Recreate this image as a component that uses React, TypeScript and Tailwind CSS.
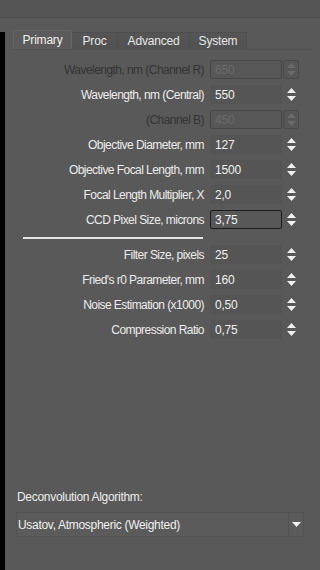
import React from "react";

const font = { fontFamily: '"Liberation Sans", Arial, sans-serif' };

function Spinner({ disabled }: { disabled?: boolean }) {
  const c = disabled ? "#6a6a6a" : "#f2f2f2";
  return (
    <div
      className={
        "w-[16px] h-[19px] flex flex-col items-center justify-center gap-[3px] rounded-[2px] " +
        (disabled ? "border border-[#4a4a4a] bg-[#565656]" : "")
      }
    >
      <svg width="9" height="5" viewBox="0 0 9 5">
        <polygon points="0,5 4.5,0 9,5" fill={c} />
      </svg>
      <svg width="9" height="5" viewBox="0 0 9 5">
        <polygon points="0,0 9,0 4.5,5" fill={c} />
      </svg>
    </div>
  );
}

function Row({
  label,
  value,
  disabled,
  active,
}: {
  label: string;
  value: string;
  disabled?: boolean;
  active?: boolean;
}) {
  return (
    <div className="h-[25px] flex items-center">
      <div
        className={
          "w-[205px] text-right text-[12px] tracking-[-0.55px] pr-[6px] whitespace-nowrap " +
          (disabled ? "text-[#343434]" : "text-[#ececec]")
        }
      >
        {label}
      </div>
      <div
        className={
          "w-[72px] h-[19px] flex items-center pl-[4px] text-[12px] tracking-[-0.2px] rounded-[2px] border " +
          (disabled
            ? "border-[#454545] bg-[#575757] text-[#6b6b6b]"
            : active
            ? "border-[#1c1c1c] bg-[#585858] text-[#f0f0f0]"
            : "border-[#545454] bg-[#555555] text-[#f0f0f0]")
        }
      >
        {value}
      </div>
      <div className="ml-[1px]">
        <Spinner disabled={disabled} />
      </div>
    </div>
  );
}

export default function App() {
  return (
    <div
      className="w-[320px] h-[570px] bg-[#595959] overflow-hidden flex flex-col"
      style={font}
    >
      <div className="h-[18px] bg-[#555555] border-b border-[#4b4b4b] shrink-0" />
      <div className="flex flex-1 min-h-0">
        <div className="w-[5px] mt-[14px] bg-black shrink-0" />
        <div className="flex-1 flex flex-col">
          {/* tabs */}
          <div className="mt-[13px] ml-[8px] mr-[8px] flex items-end h-[19px] border-b border-[#505050]">
            <div className="h-[19px] w-[59px] flex items-center justify-center text-[12px] tracking-[-0.2px] text-[#f0f0f0] bg-[#5b5b5b] border-t border-l border-r border-[#666666] rounded-t-[2px]">
              Primary
            </div>
            <div className="h-[17px] w-[46px] flex items-center justify-center text-[12px] tracking-[-0.2px] text-[#e6e6e6] bg-gradient-to-b from-[#555555] to-[#525252] border-t border-r border-[#4e4e4e]">
              Proc
            </div>
            <div className="h-[17px] w-[72px] flex items-center justify-center text-[12px] tracking-[-0.2px] text-[#e6e6e6] bg-gradient-to-b from-[#555555] to-[#525252] border-t border-r border-[#4e4e4e]">
              Advanced
            </div>
            <div className="h-[17px] w-[57px] flex items-center justify-center text-[12px] tracking-[-0.2px] text-[#e6e6e6] bg-gradient-to-b from-[#555555] to-[#525252] border-t border-r border-[#4e4e4e]">
              System
            </div>
          </div>

          <div className="mt-[7px] flex flex-col">
            <Row label="Wavelength, nm (Channel R)" value="650" disabled />
            <Row label="Wavelength, nm (Central)" value="550" />
            <Row label="(Channel B)" value="450" disabled />
            <Row label="Objective Diameter, mm" value="127" />
            <Row label="Objective Focal Length, mm" value="1500" />
            <Row label="Focal Length Multiplier, X" value="2,0" />
            <Row label="CCD Pixel Size, microns" value="3,75" active />
          </div>

          <div className="ml-[18px] w-[180px] h-[2px] bg-[#e4e4e4] mt-[5px] mb-[3px]" />

          <div className="flex flex-col">
            <Row label="Filter Size, pixels" value="25" />
            <Row label="Fried's r0 Parameter, mm" value="160" />
            <Row label="Noise Estimation (x1000)" value="0,50" />
            <Row label="Compression Ratio" value="0,75" />
          </div>

          <div className="flex-1" />

          <div className="ml-[12px] text-[12px] tracking-[-0.3px] text-[#ececec] mb-[6px]">
            Deconvolution Algorithm:
          </div>
          <div className="ml-[11px] w-[288px] h-[25px] flex items-center border border-[#535353] bg-[#5b5b5b] rounded-[2px] mb-[33px]">
            <div className="flex-1 pl-[1px] text-[12px] tracking-[-0.3px] text-[#f0f0f0]">
              Usatov, Atmospheric (Weighted)
            </div>
            <div className="w-[15px] h-full border-l border-[#525252] flex items-center justify-center">
              <svg width="9" height="5" viewBox="0 0 9 5">
                <polygon points="0,0 9,0 4.5,5" fill="#f2f2f2" />
              </svg>
            </div>
          </div>
        </div>
      </div>
    </div>
  );
}
